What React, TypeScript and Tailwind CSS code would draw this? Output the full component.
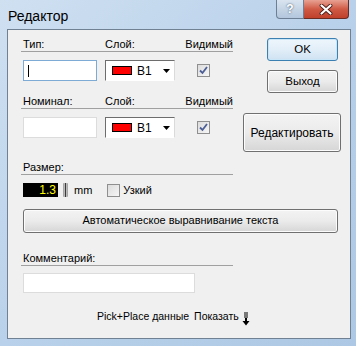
import React from "react";

const font = { fontFamily: '"Liberation Sans", Arial, sans-serif' };

function WinButton({ children, className = "", primary = false }: { children: React.ReactNode; className?: string; primary?: boolean }) {
  return (
    <div
      className={`flex items-center justify-center rounded-[3px] border text-[11.5px] text-black ${
        primary
          ? "border-[#3c7fb1] bg-gradient-to-b from-[#eef6fc] via-[#e2eef8] to-[#cfe2f2] shadow-[inset_0_0_0_1px_#c8e6f8]"
          : "border-[#707070] bg-gradient-to-b from-[#f3f3f3] via-[#ebebeb] to-[#d6d6d6] shadow-[inset_0_0_0_1px_#fcfcfc]"
      } ${className}`}
    >
      {children}
    </div>
  );
}

function Check({ checked = false }: { checked?: boolean }) {
  return (
    <div className="flex h-[13px] w-[13px] items-center justify-center border border-[#8f8f8f] bg-gradient-to-br from-[#dcdcdc] to-[#f6f6f6]">
      {checked && (
        <svg width="9" height="9" viewBox="0 0 9 9">
          <path d="M1 4.5 L3.5 7 L8 1" fill="none" stroke="#4c5f96" strokeWidth="1.8" />
        </svg>
      )}
    </div>
  );
}

function LayerSelect() {
  return (
    <div className="flex h-[21px] w-[70px] items-center border border-t-[#6d6d6d] border-l-[#6d6d6d] border-r-[#dadada] border-b-[#ffffff] bg-white pl-[6px]">
      <div className="h-[9px] w-[20px] border border-black bg-[#ff0000]" />
      <span className="ml-[5px] text-[12px] text-black">B1</span>
      <svg className="ml-auto mr-[4px]" width="7" height="4" viewBox="0 0 7 4">
        <path d="M0 0 H7 L3.5 4 Z" fill="#000" />
      </svg>
    </div>
  );
}

function SectionLabel({ children }: { children: React.ReactNode }) {
  return (
    <div className="flex h-[14px] w-[212px] items-end border-b border-[#a0a0a0] pl-[2px] text-[11px] leading-[14px] text-black">
      {children}
    </div>
  );
}

export default function App() {
  return (
    <div style={font} className="h-[346px] w-[356px] overflow-hidden bg-gradient-to-br from-[#cfe0f1] via-[#b9d1ea] to-[#adc8e4]">
      <div className="relative flex h-[29px] items-start">
        <span className="ml-[8px] mt-[6px] text-[14px] text-black">Редактор</span>
        <div className="ml-auto mr-[7px] flex">
          <div className="flex h-[19px] w-[28px] items-center justify-center rounded-bl-[4px] border border-t-0 border-[#6c7f95] bg-gradient-to-b from-[#d9e4ef] to-[#b3c6dc] text-[12px] font-bold text-white [text-shadow:0_0_2px_#34495e]">
            ?
          </div>
          <div className="flex h-[19px] w-[45px] items-center justify-center rounded-br-[4px] border border-l-0 border-t-0 border-[#6b2a22] bg-gradient-to-b from-[#e8a193] via-[#cf5a45] to-[#c0402b]">
            <svg width="14" height="11" viewBox="0 0 14 11">
              <path d="M2.5 1.5 L11.5 9.5 M11.5 1.5 L2.5 9.5" stroke="#4a1a14" strokeWidth="3.8" strokeLinecap="round" />
              <path d="M2.5 1.5 L11.5 9.5 M11.5 1.5 L2.5 9.5" stroke="#ffffff" strokeWidth="2.2" strokeLinecap="round" />
            </svg>
          </div>
        </div>
      </div>

      <div className="ml-[7px] h-[310px] w-[344px] border border-[#6f8193] bg-[#f0f0f0] pl-[13px] pt-[8px]">
        <div className="flex items-start">
          <div className="w-[212px]">
            <SectionLabel>
              <span className="w-[82px]">Тип:</span>
              <span>Слой:</span>
              <span className="ml-auto">Видимый</span>
            </SectionLabel>
            <div className="mt-[8px] flex items-center pl-[2px]">
              <div className="flex h-[21px] w-[74px] items-center border border-[#7eaad6] bg-white pl-[4px]">
                <div className="h-[12px] w-px bg-black" />
              </div>
              <div className="ml-[8px]">
                <LayerSelect />
              </div>
              <div className="ml-[22px]">
                <Check checked />
              </div>
            </div>

            <div className="mt-[14px]">
              <SectionLabel>
                <span className="w-[82px]">Номинал:</span>
                <span>Слой:</span>
                <span className="ml-auto">Видимый</span>
              </SectionLabel>
            </div>
            <div className="mt-[8px] flex items-center pl-[2px]">
              <div className="h-[21px] w-[74px] border border-[#dcdcdc] bg-white" />
              <div className="ml-[8px]">
                <LayerSelect />
              </div>
              <div className="ml-[22px]">
                <Check checked />
              </div>
            </div>
          </div>

          <div className="ml-[10px] flex w-[98px] flex-col">
            <WinButton primary className="ml-[24px] h-[23px] w-[71px]">OK</WinButton>
            <WinButton className="ml-[24px] mt-[9px] h-[23px] w-[71px]">Выход</WinButton>
            <WinButton className="mt-[20px] h-[39px] w-[98px] text-[12px]">Редактировать</WinButton>
          </div>
        </div>

        <div className="mt-[9px]">
          <SectionLabel>Размер:</SectionLabel>
        </div>
        <div className="mt-[7px] flex items-center pl-[2px] text-[11px]">
          <div className="flex h-[14px] w-[35px] items-center justify-end bg-black pr-[2px] text-[12px] leading-none text-[#ffff00]">1.3</div>
          <div className="ml-[5px] flex h-[14px] w-[5px] justify-center rounded-[1px] bg-gradient-to-r from-[#9a9a9a] via-[#d0d0d0] to-[#9a9a9a]">
            <div className="h-full w-px bg-[#3a3a3a]" />
          </div>
          <span className="ml-[6px] text-black">mm</span>
          <div className="ml-[15px]">
            <Check />
          </div>
          <span className="ml-[3px] text-black">Узкий</span>
        </div>

        <WinButton className="ml-[2px] mt-[10px] h-[24px] w-[315px] text-[11px]">Автоматическое выравнивание текста</WinButton>

        <div className="mt-[19px]">
          <SectionLabel>Комментарий:</SectionLabel>
        </div>
        <div className="ml-[2px] mt-[7px] h-[20px] w-[172px] border border-[#dcdcdc] bg-white" />

        <div className="mt-[16px] flex items-center text-[10.5px] text-black">
          <span className="ml-[76px]">Pick+Place данные</span>
          <span className="ml-[5px]">Показать</span>
          <svg className="ml-[3px] mt-[3px]" width="8" height="14" viewBox="0 0 8 14">
            <path d="M2 1 H6 M2 3 H6 M2 5 H6" stroke="#000" strokeWidth="1" />
            <path d="M3 6 H5 V9 H7.5 L4 13.5 L0.5 9 H3 Z" fill="#000" />
          </svg>
        </div>
      </div>
    </div>
  );
}
